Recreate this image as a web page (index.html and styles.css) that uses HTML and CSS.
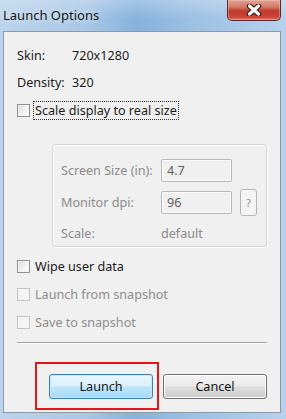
FILE: index.html
```html
<!DOCTYPE html>
<html lang="en">
<head>
    <meta charset="UTF-8">
    <meta name="viewport" content="width=device-width, initial-scale=1.0">
    <title>Launch Options</title>
    <link rel="stylesheet" href="styles.css">
</head>
<body>
    <div class="window">
        <div class="titlebar">
            <span class="title">Launch Options</span>
            <div class="close-btn">
                <svg width="18" height="12" viewBox="0 0 18 12">
                    <path d="M4.5 2 L13.5 10 M13.5 2 L4.5 10" stroke="#3b1a16" stroke-width="5.5" stroke-linecap="round"/>
                    <path d="M4.5 2 L13.5 10 M13.5 2 L4.5 10" stroke="#ffffff" stroke-width="3.2" stroke-linecap="round"/>
                </svg>
            </div>
        </div>

        <div class="client">
            <div class="info-row"><span class="info-label">Skin:</span><span>720x1280</span></div>
            <div class="info-row"><span class="info-label">Density:</span><span>320</span></div>

            <div class="check-row">
                <span class="checkbox"></span>
                <span class="check-text focused">Scale display to real size</span>
            </div>

            <div class="group">
                <div class="group-row">
                    <span class="group-label">Screen Size (in):</span>
                    <span class="text-input">4.7</span>
                </div>
                <div class="group-row tall">
                    <span class="group-label">Monitor dpi:</span>
                    <span class="text-input">96</span>
                    <span class="help-btn">?</span>
                </div>
                <div class="group-row short">
                    <span class="group-label">Scale:</span>
                    <span class="group-value">default</span>
                </div>
            </div>

            <div class="check-list">
                <div class="check-row">
                    <span class="checkbox"></span>
                    <span class="check-text">Wipe user data</span>
                </div>
                <div class="check-row disabled">
                    <span class="checkbox"></span>
                    <span class="check-text">Launch from snapshot</span>
                </div>
                <div class="check-row disabled">
                    <span class="checkbox"></span>
                    <span class="check-text">Save to snapshot</span>
                </div>
            </div>

            <div class="separator"></div>

            <div class="buttons">
                <div class="highlight">
                    <button class="btn btn-default">Launch</button>
                </div>
                <button class="btn">Cancel</button>
            </div>
        </div>
    </div>
</body>
</html>
```

FILE: styles.css
```css
* {
    margin: 0;
    padding: 0;
    box-sizing: border-box;
}

body {
    font-family: 'Noto Sans', 'Open Sans', sans-serif;
    font-size: 12.6px;
    color: #1b1b1b;
    width: 286px;
    height: 419px;
    overflow: hidden;
}

.window {
    width: 286px;
    height: 419px;
    display: flex;
    flex-direction: column;
    background: linear-gradient(90deg, #bcd4ec 0%, #a9c7e6 30%, #86b2dc 48%, #9bbfe3 65%, #b7d1ec 100%);
}

.titlebar {
    height: 31px;
    display: flex;
    justify-content: space-between;
    align-items: flex-start;
    padding-left: 3px;
    padding-right: 5px;
    background: linear-gradient(180deg, rgba(255, 255, 255, 0.25) 0%, rgba(255, 255, 255, 0) 60%);
}

.title {
    margin-top: 6px;
    font-size: 13px;
    color: #141414;
    text-shadow: 0 0 6px rgba(255, 255, 255, 0.9);
}

.close-btn {
    width: 54px;
    height: 21px;
    border: 1px solid #5a2a22;
    border-top: none;
    border-radius: 0 0 5px 5px;
    background: linear-gradient(180deg, #e2a194 0%, #d27a68 35%, #c2392a 55%, #c8483a 85%, #d9786a 100%);
    display: flex;
    align-items: center;
    justify-content: center;
    box-shadow: inset 0 0 0 1px rgba(255, 220, 210, 0.35);
}

.client {
    flex: 1;
    margin: 0 5px 6px 3px;
    background: #f0f0f0;
    border: 1px solid #8c99a6;
    padding: 15px 0 0 13px;
    display: flex;
    flex-direction: column;
}

.info-row {
    height: 18px;
    line-height: 18px;
    margin-bottom: 9px;
    display: flex;
}

.info-label {
    width: 55px;
}

.check-row {
    height: 18px;
    display: flex;
    align-items: center;
    gap: 5px;
}

.checkbox {
    flex: none;
    width: 13px;
    height: 13px;
    border: 1px solid #8e8f8f;
    background: linear-gradient(135deg, #dcdcdc 0%, #f4f4f4 60%, #ffffff 100%);
    box-shadow: inset 0 0 0 1px #f4f4f4;
}

.check-text.focused {
    outline: 1px dotted #333;
    outline-offset: 0;
    padding: 0 1px;
    margin-left: -1px;
}

.check-row.disabled .checkbox {
    border-color: #c4c4c4;
    background: #f4f4f4;
}

.check-row.disabled .check-text {
    color: #8d8d8d;
}

.group {
    margin: 25px 0 0 35px;
    width: 215px;
    border: 1px solid #d5d5d5;
    border-radius: 3px;
    box-shadow: 1px 1px 0 #ffffff, inset 1px 1px 0 #ffffff;
    padding: 14px 0 4px 8px;
    display: flex;
    flex-direction: column;
    gap: 7px;
    color: #8a8a8a;
}

.group-row {
    height: 23px;
    display: flex;
    align-items: center;
}

.group-row.tall {
    height: 27px;
}

.group-row.short {
    height: 18px;
    margin-top: 1px;
}

.group-label {
    width: 100px;
    white-space: nowrap;
}

.text-input {
    width: 71px;
    height: 23px;
    border: 1px solid #b8b8b8;
    border-radius: 2px;
    background: #f0f0f0;
    box-shadow: inset 0 0 0 1px #fafafa;
    padding-left: 5px;
    line-height: 21px;
    color: #5e5e5e;
}

.help-btn {
    width: 17px;
    height: 27px;
    margin-left: 8px;
    border: 1px solid #b5b5b5;
    border-radius: 3px;
    background: #f4f4f4;
    display: flex;
    align-items: center;
    justify-content: center;
    font-size: 10.5px;
    color: #8a8a8a;
}

.group-value {
    color: #8a8a8a;
}

.check-list {
    margin-top: 10px;
    display: flex;
    flex-direction: column;
    gap: 10px;
}

.separator {
    margin-top: 11px;
    width: 250px;
    height: 2px;
    border-top: 1px solid #a0a0a0;
    border-bottom: 1px solid #ffffff;
}

.buttons {
    margin-top: 18px;
    display: flex;
    align-items: center;
}

.highlight {
    margin-left: 18px;
    border: 2px solid #e8141c;
    padding: 10px 4px 9px 12px;
}

.btn {
    width: 104px;
    height: 25px;
    font-family: inherit;
    font-size: 12.6px;
    color: #151515;
    border: 1px solid #707070;
    border-radius: 3px;
    background: linear-gradient(180deg, #f2f2f2 0%, #ebebeb 48%, #dddddd 52%, #cfcfcf 100%);
    box-shadow: inset 0 0 0 1px #fcfcfc;
    margin-left: 4px;
}

.btn-default {
    margin-left: 0;
    border-color: #3c7fb1;
    background: linear-gradient(180deg, #eaf6fd 0%, #d9f0fc 48%, #bee6fd 52%, #a7d9f5 100%);
    box-shadow: inset 0 0 0 1px #c8e8fa;
}
```
